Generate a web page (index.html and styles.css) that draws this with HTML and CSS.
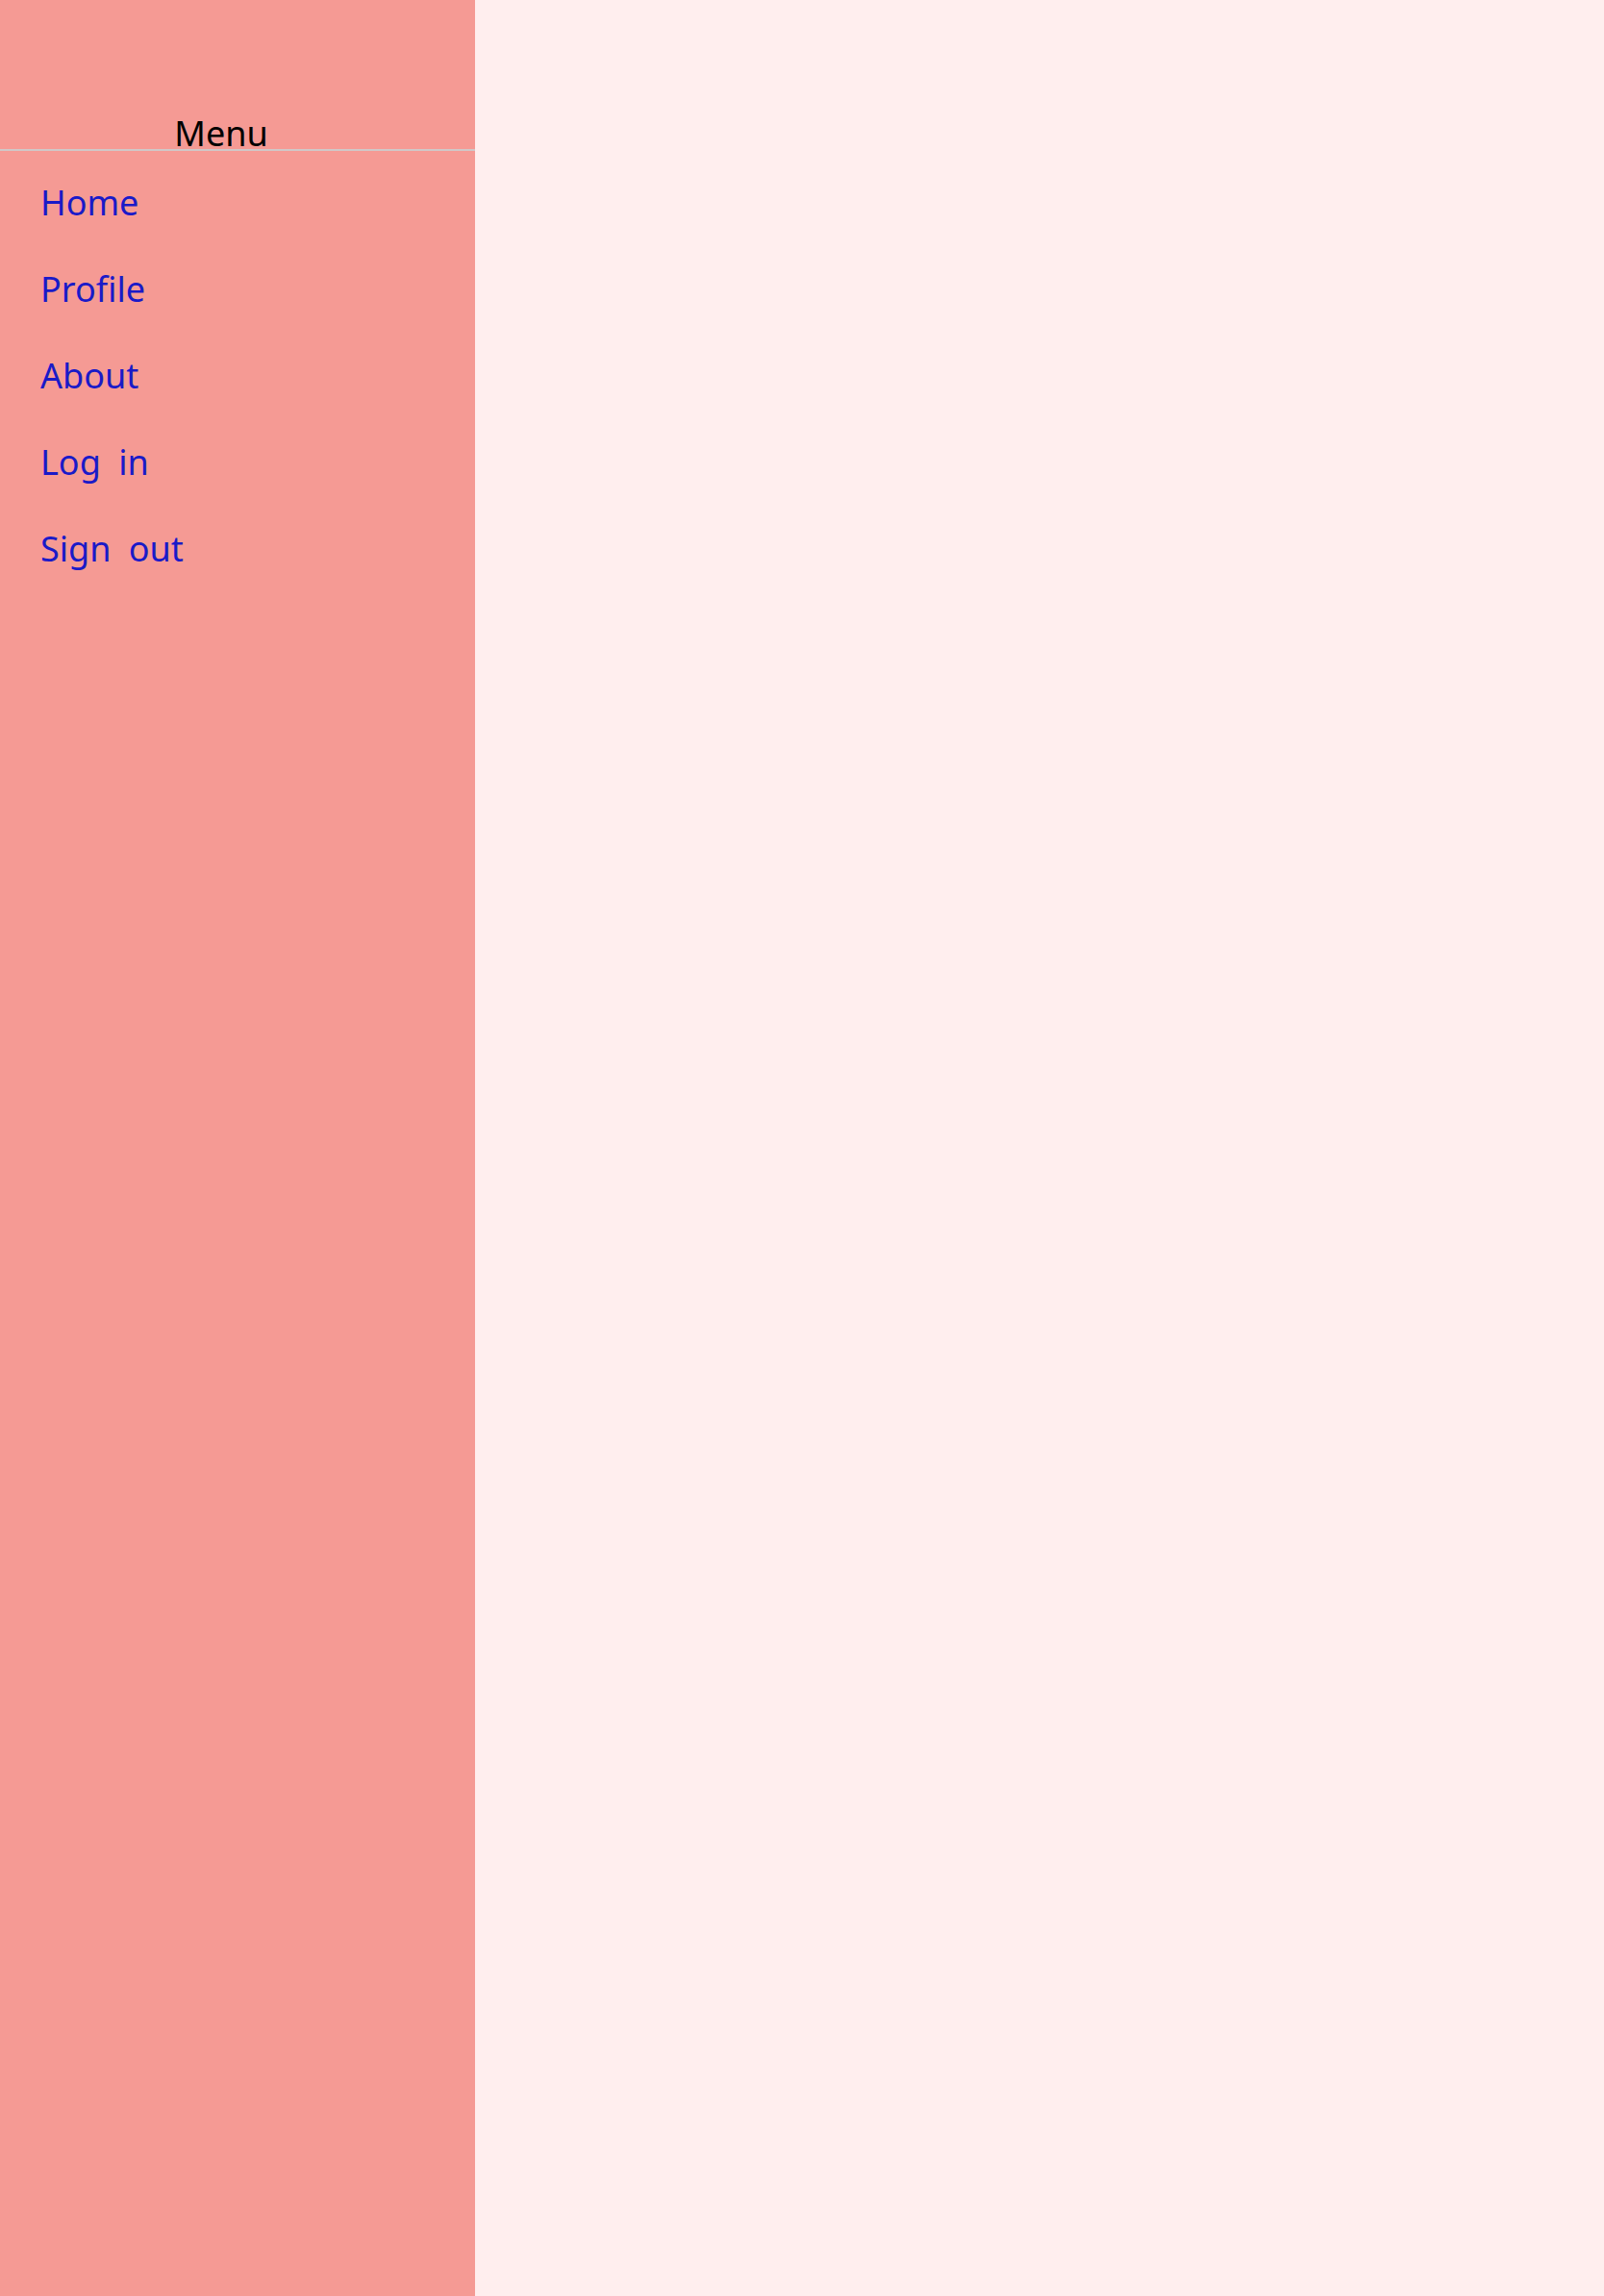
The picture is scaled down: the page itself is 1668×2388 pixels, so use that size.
FILE: index.html
```html
<!DOCTYPE html>
<html>
<head>
<meta charset="utf-8">
<link rel="stylesheet" href="styles.css">
</head>
<body>
<div class="layout">
  <nav class="sidebar">
    <div class="sidebar-header">Menu</div>
    <ul class="nav-list">
      <li><a href="#">Home</a></li>
      <li><a href="#">Profile</a></li>
      <li><a href="#">About</a></li>
      <li><a href="#">Log in</a></li>
      <li><a href="#">Sign out</a></li>
    </ul>
  </nav>
  <main class="content"></main>
</div>
</body>
</html>
```
FILE: styles.css
```css
html, body {
  margin: 0;
  padding: 0;
  height: 100%;
}
body {
  font-family: "Noto Sans", sans-serif;
  background: #ffeeee;
}
.layout {
  display: flex;
  min-height: 2388px;
}
.sidebar {
  width: 494px;
  flex: none;
  background: #f59a94;
}
.sidebar-header {
  font-size: 36px;
  line-height: 32px;
  color: #000;
  text-align: center;
  padding: 123px 34px 0 0;
  border-bottom: 2px solid #d0c8c8;
}
.nav-list {
  list-style: none;
  margin: 0;
  padding: 28px 0 0 42px;
  display: flex;
  flex-direction: column;
  gap: 38px;
}
.nav-list a {
  font-size: 36px;
  line-height: 52px;
  color: #1a1ac8;
  text-decoration: none;
  word-spacing: 9px;
}
.content {
  flex: 1;
}
```
